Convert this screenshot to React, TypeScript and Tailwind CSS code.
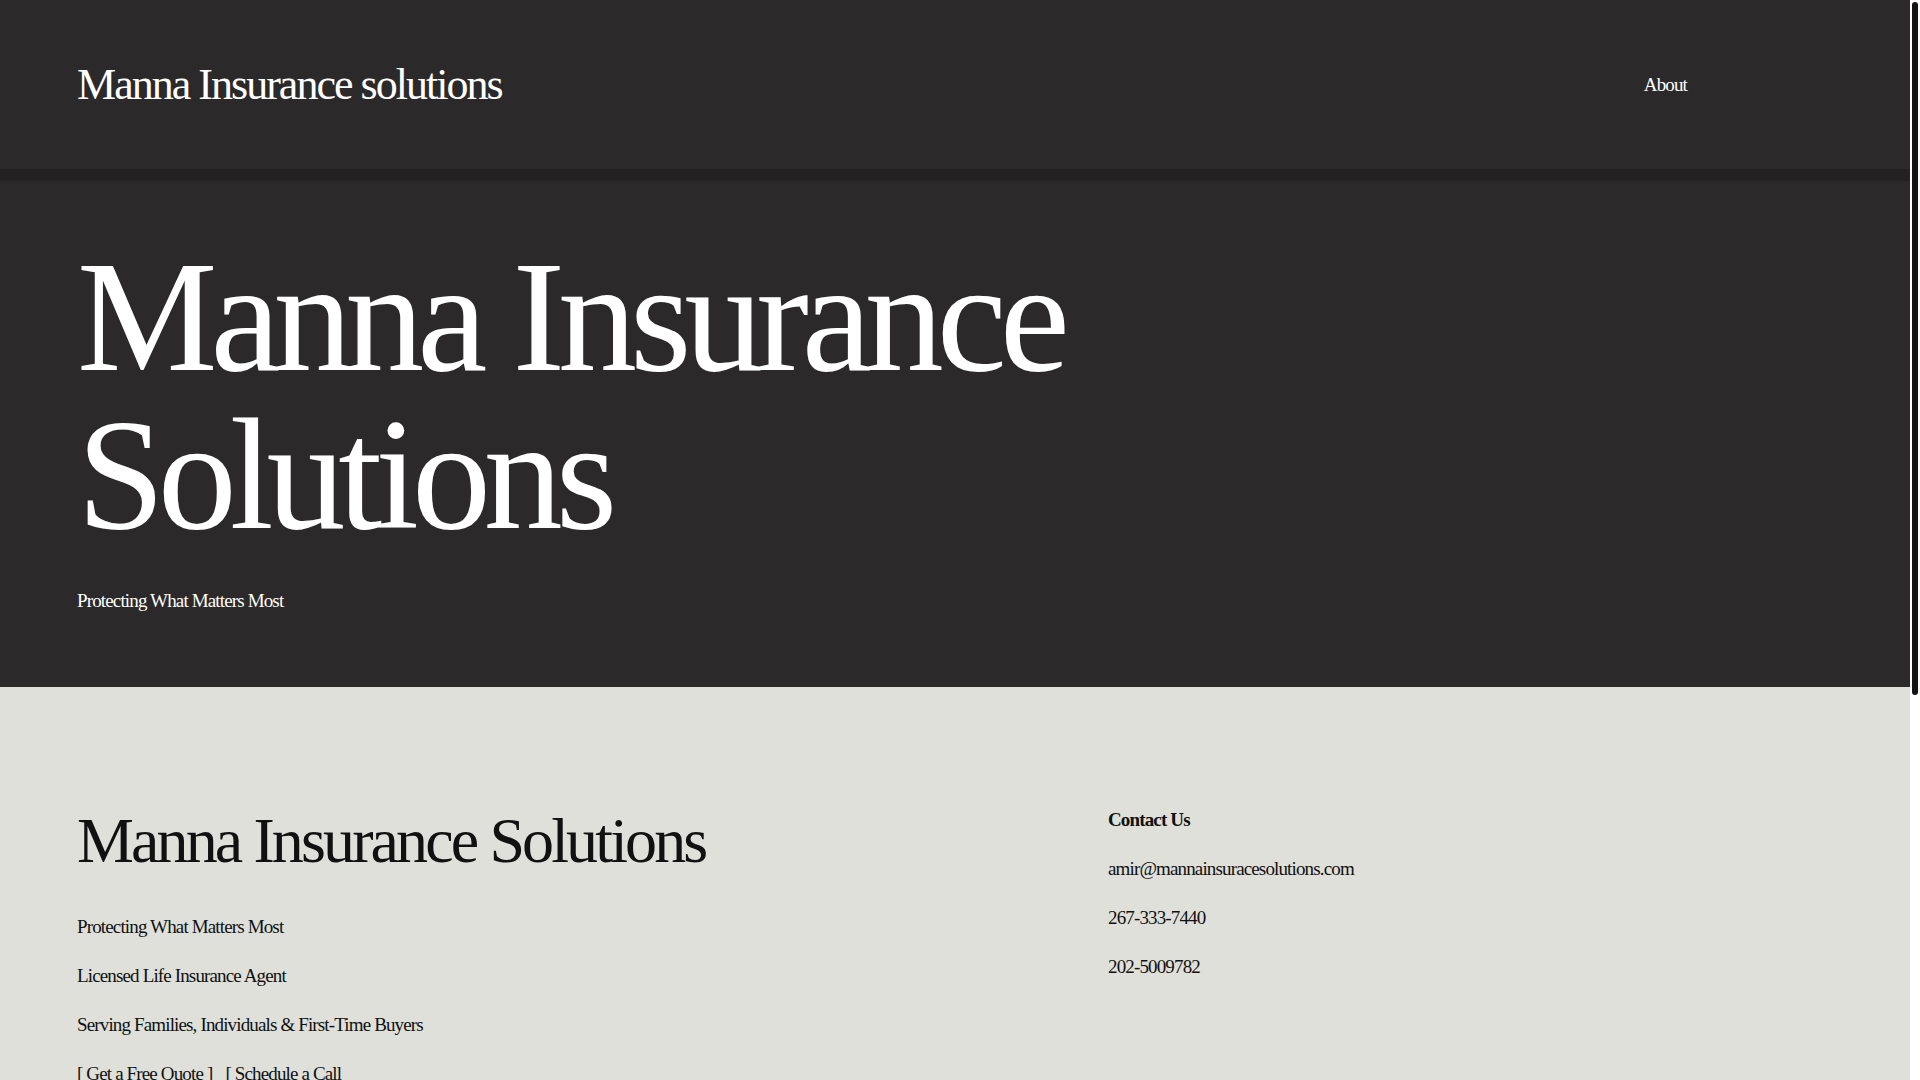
import React from "react";

export default function App() {
  return (
    <div className="flex w-full bg-white font-['Liberation_Serif','Times_New_Roman',serif]">
      <main className="min-w-0 flex-1">
        <header className="bg-[#2b292a]">
          <div className="flex h-[169px] items-center justify-between pl-[77px] pr-[223px]">
            <a className="text-[44px] leading-[50px] tracking-[-0.045em] text-white">Manna Insurance solutions</a>
            <nav className="flex items-center">
              <a className="text-[19px] leading-[27px] tracking-[-0.045em] text-white">About</a>
            </nav>
          </div>
          <div className="h-[12px] bg-[#232122]" />
        </header>

        <section className="bg-[#2b292a] px-[77px] pb-[73px] pt-[57px] text-white">
          <h1 className="text-[158px] leading-[158px] font-normal tracking-[-0.045em]">
            Manna Insurance
            <br />
            Solutions
          </h1>
          <p className="mt-[33px] text-[19px] leading-[27px] tracking-[-0.045em]">Protecting What Matters Most</p>
        </section>

        <section className="min-h-[996px] bg-[#dfe0da] px-[77px] pt-[119px] text-[#111111]">
          <div className="grid grid-cols-[1031px_1fr] items-start">
            <div className="flex flex-col">
              <h2 className="text-[64px] leading-[70px] font-normal tracking-[-0.045em]">Manna Insurance Solutions</h2>
              <div className="mt-[37px] flex flex-col gap-[22px] text-[19px] leading-[27px] tracking-[-0.045em]">
                <p>Protecting What Matters Most</p>
                <p>Licensed Life Insurance Agent</p>
                <p>Serving Families, Individuals &amp; First-Time Buyers</p>
                <p className="flex gap-[13px]">
                  <span>[ Get a Free Quote ]</span>
                  <span>[ Schedule a Call</span>
                </p>
              </div>
            </div>
            <div className="flex flex-col gap-[22px] text-[19px] leading-[27px] tracking-[-0.045em]">
              <p className="font-bold">Contact Us</p>
              <p>amir@mannainsuracesolutions.com</p>
              <p>267-333-7440</p>
              <p>202-5009782</p>
            </div>
          </div>
        </section>
      </main>

      <aside className="w-[10px] shrink-0 bg-white pt-[2px]">
        <div className="mx-auto h-[693px] w-[6px] rounded-full bg-[#141414]" />
      </aside>
    </div>
  );
}
